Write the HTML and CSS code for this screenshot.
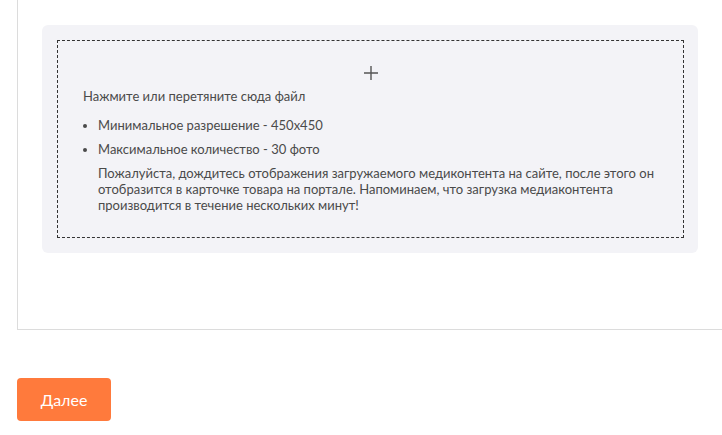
FILE: index.html
```html
<!DOCTYPE html>
<html lang="ru">
  <head>
    <meta charset="UTF-8">
    <meta name="viewport" content="width=device-width, initial-scale=1.0">
    <title>Загрузка медиаконтента</title>
    <link rel="stylesheet" href="styles.css">
  </head>
  <body>
    <div class="card">
      <div class="upload">
        <div class="dropzone">
          <svg class="plus" width="14" height="14" viewBox="0 0 14 14">
            <path d="M7 0v14M0 7h14" stroke="#555" stroke-width="1.4" fill="none"/>
          </svg>
          <div class="hint">Нажмите или перетяните сюда файл</div>
          <ul class="rules">
            <li>Минимальное разрешение - 450x450</li>
            <li>Максимальное количество - 30 фото</li>
          </ul>
          <p class="note">Пожалуйста, дождитесь отображения загружаемого медиконтента на сайте, после этого он отобразится в карточке товара на портале. Напоминаем, что загрузка медиаконтента производится в течение нескольких минут!</p>
        </div>
      </div>
    </div>
    <button class="next" type="button">Далее</button>
  </body>
</html>
```

FILE: styles.css
```css
body {
  font-family: Lato, "Noto Sans", sans-serif;
  margin: 0;
  padding: 0;
  overflow-x: hidden;
  color: #4a4a4a;
}
.card {
  margin: 0 -1px 0 17px;
  padding: 25px 24px 76px 24px;
  border: 1px solid #dcdcdc;
  border-top: none;
}
.upload {
  background-color: #f3f3f7;
  border-radius: 6px;
  padding: 15px 14px 15px 15px;
}
.dropzone {
  border: 1px dashed #333;
  padding: 25px 24px 24px 25px;
  font-size: 13px;
  line-height: 16px;
}
.plus {
  display: block;
  margin: 0 auto 8px auto;
}
.hint {
  margin-bottom: 13px;
}
.rules {
  margin: 0;
  padding-left: 15px;
}
.rules li {
  margin-bottom: 8px;
}
.note {
  margin: 0 0 0 15px;
}
.next {
  margin: 48px 0 14px 17px;
  width: 94px;
  height: 43px;
  border: none;
  border-radius: 4px;
  background-color: #ff7a3c;
  color: #fff;
  font-family: Lato, "Noto Sans", sans-serif;
  font-size: 16px;
  cursor: pointer;
}
```
